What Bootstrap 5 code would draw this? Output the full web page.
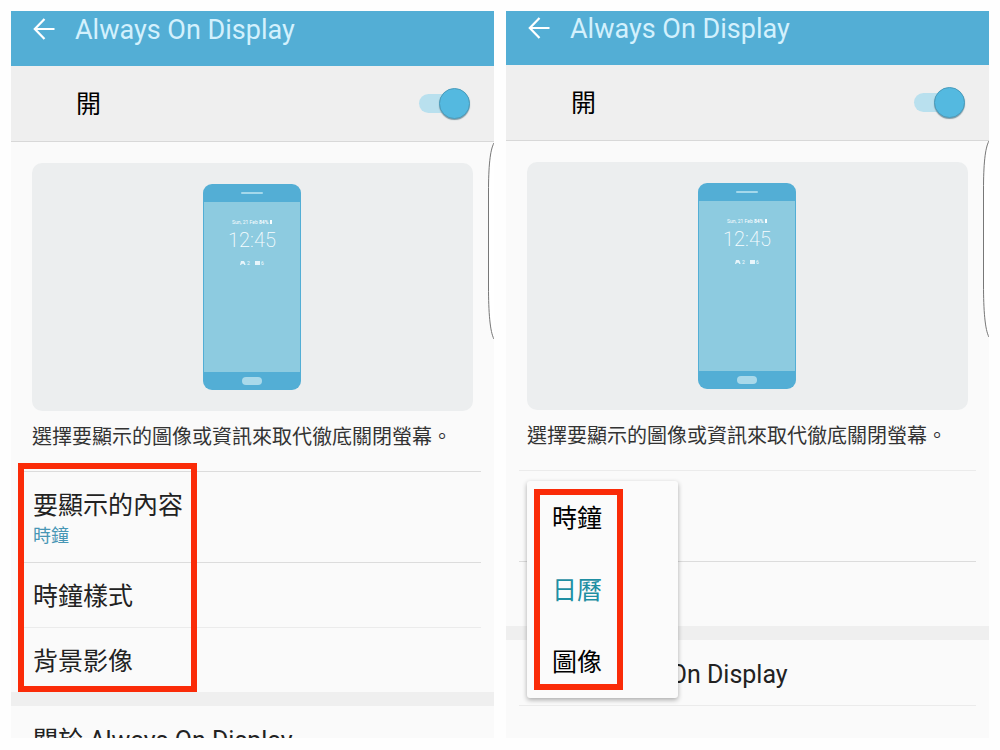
<!DOCTYPE html>
<html lang="zh-Hant">
<head>
<meta charset="utf-8">
<meta name="viewport" content="width=device-width, initial-scale=1">
<title>Always On Display</title>
<link href="https://cdn.jsdelivr.net/npm/bootstrap@5.3.0/dist/css/bootstrap.min.css" rel="stylesheet">
<style>
  body { font-family: Roboto, "Noto Sans CJK TC", sans-serif; background: #fefefe; color: #222; }
  .board { padding: 11px 11px 12px; gap: 12px; }
  .screen { flex: 1 1 0; background: #fafafa; }
  .topbar { background: #53aed5; padding: 1px 22px 18px; gap: 20px; }
  .scrolled .topbar { padding-top: 0; }
  .topbar h1 { font-size: 27px; line-height: 36px; color: #d3f1fd; font-weight: 400; }
  .back { width: 22px; height: 34px; }
  .master { background: #efefef; border-bottom: 1px solid #d8d8d8; padding: 0 24px 0 65px; height: 76px; }
  .master label, .item-title, .choice { font-size: 25px; line-height: 36px; }
  .master label { padding-top: 3px; }
  .master label, .choice { color: #000; }
  .toggle { appearance: none; position: relative; width: 51px; height: 31px; margin: 0; }
  .toggle::before { content: ""; position: absolute; inset: 6px 10px 6px 0; border-radius: 10px; background: #b9e0ee; }
  .toggle::after { content: ""; position: absolute; right: 0; top: 0; width: 31px; height: 31px; border-radius: 50%; background: #54b9e0; border: 1px solid #4a9dbd; box-shadow: 0 1px 1px #7f9aa5; }
  .preview { margin: 21px 21px 0; padding-right: 2px; height: 248px; border-radius: 10px; background: #eceeef; }
  .hint { margin: 11px 21px 19px; font-size: 20px; line-height: 30px; color: #333; white-space: nowrap; }
  .items { padding: 0 13px; }
  .item { border-top: 1px solid #dcdcdc; padding: 4px 9px 0; height: 65px; text-decoration: none; color: #222; white-space: nowrap; }
  .item-tall { height: 91px; padding-top: 2px; }
  .item-value { font-size: 18px; line-height: 24px; color: #4796b5; }
  .faint { border-color: #ebebeb; }
  .band { height: 14px; background: #efefef; }
  .edge { right: 0; top: 131px; width: 7px; height: 198px; }
  .scrolled .edge { top: 129px; }
  .marker { border: 6px solid #fa2b08; pointer-events: none; }
  .marker-items { left: 7px; top: -8px; width: 179px; bottom: 0; }
  .marker-menu { inset: 8px 55px 8px 7px; }
  .popup { left: 21px; top: 11px; width: 151px; padding-bottom: 1px; background: #fbfbfb; border-radius: 3px; box-shadow: 0 2px 5px rgba(0,0,0,.32); z-index: 2; }
  .choice { height: 72px; padding: 4px 25px 0; border: 0; background: none; text-align: left; }
  .choice.chosen { color: #1f8fa3; }
</style>
</head>
<body>
<main class="board d-flex vh-100">

  <section class="screen position-relative overflow-hidden">
    <header class="topbar d-flex align-items-start">
      <button type="button" class="back btn p-0 border-0 d-flex align-items-center" aria-label="返回">
        <svg width="22" height="22" viewBox="0 0 22 22" fill="none" stroke="#fff" stroke-width="2.2"><path d="M21.5 11H2M11.5 1L1.8 11l9.700 10"/></svg>
      </button>
      <h1 class="m-0">Always On Display</h1>
    </header>
    <div class="master d-flex align-items-center justify-content-between">
      <label for="aod-a">開</label>
      <input class="toggle" type="checkbox" role="switch" id="aod-a" checked>
    </div>
    <div class="preview d-flex align-items-center justify-content-center">
      <svg width="98" height="206" viewBox="0 0 98 206">
        <rect width="98" height="206" rx="9" fill="#53aed5"/>
        <rect x="1" y="18" width="96" height="170" fill="#8dcbe0"/>
        <rect x="38" y="8" width="22" height="2" rx="1" fill="#a4d8eb"/>
        <rect x="39" y="193" width="20" height="8" rx="4" fill="#a9d9ea"/>
        <g fill="#f8fdff" font-family="Roboto, sans-serif">
          <text x="29" y="40" font-size="5">Sun, 21 Feb</text>
          <text x="56" y="40" font-size="5" font-weight="700">84%</text>
          <rect x="67" y="36" width="2" height="4"/>
          <text x="49" y="63" font-size="20" font-weight="200" text-anchor="middle">12:45</text>
          <path d="M38 77h3l1 2 .6 2h-1.300l-.8-1.200h-1.500l-1 1.200h-1zM52 77h5v4h-5z" opacity=".85"/>
          <text x="44" y="81" font-size="5">2</text>
          <text x="58" y="81" font-size="5">6</text>
        </g>
      </svg>
    </div>
    <p class="hint">選擇要顯示的圖像或資訊來取代徹底關閉螢幕。</p>
    <div class="position-relative">
      <nav class="items d-flex flex-column">
        <a href="#content" class="item item-tall d-flex flex-column justify-content-center">
          <span class="item-title">要顯示的內容</span>
          <span class="item-value">時鐘</span>
        </a>
        <a href="#style" class="item d-flex align-items-center"><span class="item-title">時鐘樣式</span></a>
        <a href="#background" class="item faint d-flex align-items-center"><span class="item-title">背景影像</span></a>
      </nav>
      <div class="marker marker-items position-absolute"></div>
    </div>
    <div class="band"></div>
    <nav class="items">
      <a href="#about" class="item border-0 d-flex align-items-center"><span class="item-title">關於 Always On Display</span></a>
    </nav>
    <svg class="edge position-absolute" viewBox="0 0 7 198"><path d="M7 1C3 8 1.500 25 1.500 50V145C1.500 170 3 190 7 197" fill="#fff" stroke="#777"/></svg>
  </section>

  <section class="screen scrolled position-relative overflow-hidden">
    <header class="topbar d-flex align-items-start">
      <button type="button" class="back btn p-0 border-0 d-flex align-items-center" aria-label="返回">
        <svg width="22" height="22" viewBox="0 0 22 22" fill="none" stroke="#fff" stroke-width="2.2"><path d="M21.5 11H2M11.5 1L1.8 11l9.700 10"/></svg>
      </button>
      <h1 class="m-0">Always On Display</h1>
    </header>
    <div class="master d-flex align-items-center justify-content-between">
      <label for="aod-b">開</label>
      <input class="toggle" type="checkbox" role="switch" id="aod-b" checked>
    </div>
    <div class="preview d-flex align-items-center justify-content-center">
      <svg width="98" height="206" viewBox="0 0 98 206">
        <rect width="98" height="206" rx="9" fill="#53aed5"/>
        <rect x="1" y="18" width="96" height="170" fill="#8dcbe0"/>
        <rect x="38" y="8" width="22" height="2" rx="1" fill="#a4d8eb"/>
        <rect x="39" y="193" width="20" height="8" rx="4" fill="#a9d9ea"/>
        <g fill="#f8fdff" font-family="Roboto, sans-serif">
          <text x="29" y="40" font-size="5">Sun, 21 Feb</text>
          <text x="56" y="40" font-size="5" font-weight="700">84%</text>
          <rect x="67" y="36" width="2" height="4"/>
          <text x="49" y="63" font-size="20" font-weight="200" text-anchor="middle">12:45</text>
          <path d="M38 77h3l1 2 .6 2h-1.300l-.8-1.200h-1.500l-1 1.200h-1zM52 77h5v4h-5z" opacity=".85"/>
          <text x="44" y="81" font-size="5">2</text>
          <text x="58" y="81" font-size="5">6</text>
        </g>
      </svg>
    </div>
    <p class="hint">選擇要顯示的圖像或資訊來取代徹底關閉螢幕。</p>
    <div class="position-relative">
      <div class="items">
        <div class="item item-tall faint"></div>
        <div class="item"></div>
      </div>
      <div class="popup position-absolute d-flex flex-column">
        <button type="button" class="choice">時鐘</button>
        <button type="button" class="choice chosen">日曆</button>
        <button type="button" class="choice">圖像</button>
        <div class="marker marker-menu position-absolute"></div>
      </div>
    </div>
    <div class="band"></div>
    <nav class="items">
      <a href="#about" class="item border-0 d-flex align-items-center"><span class="item-title">關於 Always On Display</span></a>
      <div class="item faint"></div>
    </nav>
    <svg class="edge position-absolute" viewBox="0 0 7 198"><path d="M7 1C3 8 1.500 25 1.500 50V145C1.500 170 3 190 7 197" fill="#fff" stroke="#777"/></svg>
  </section>

</main>
<script src="https://cdn.jsdelivr.net/npm/bootstrap@5.3.0/dist/js/bootstrap.bundle.min.js"></script>
</body>
</html>
